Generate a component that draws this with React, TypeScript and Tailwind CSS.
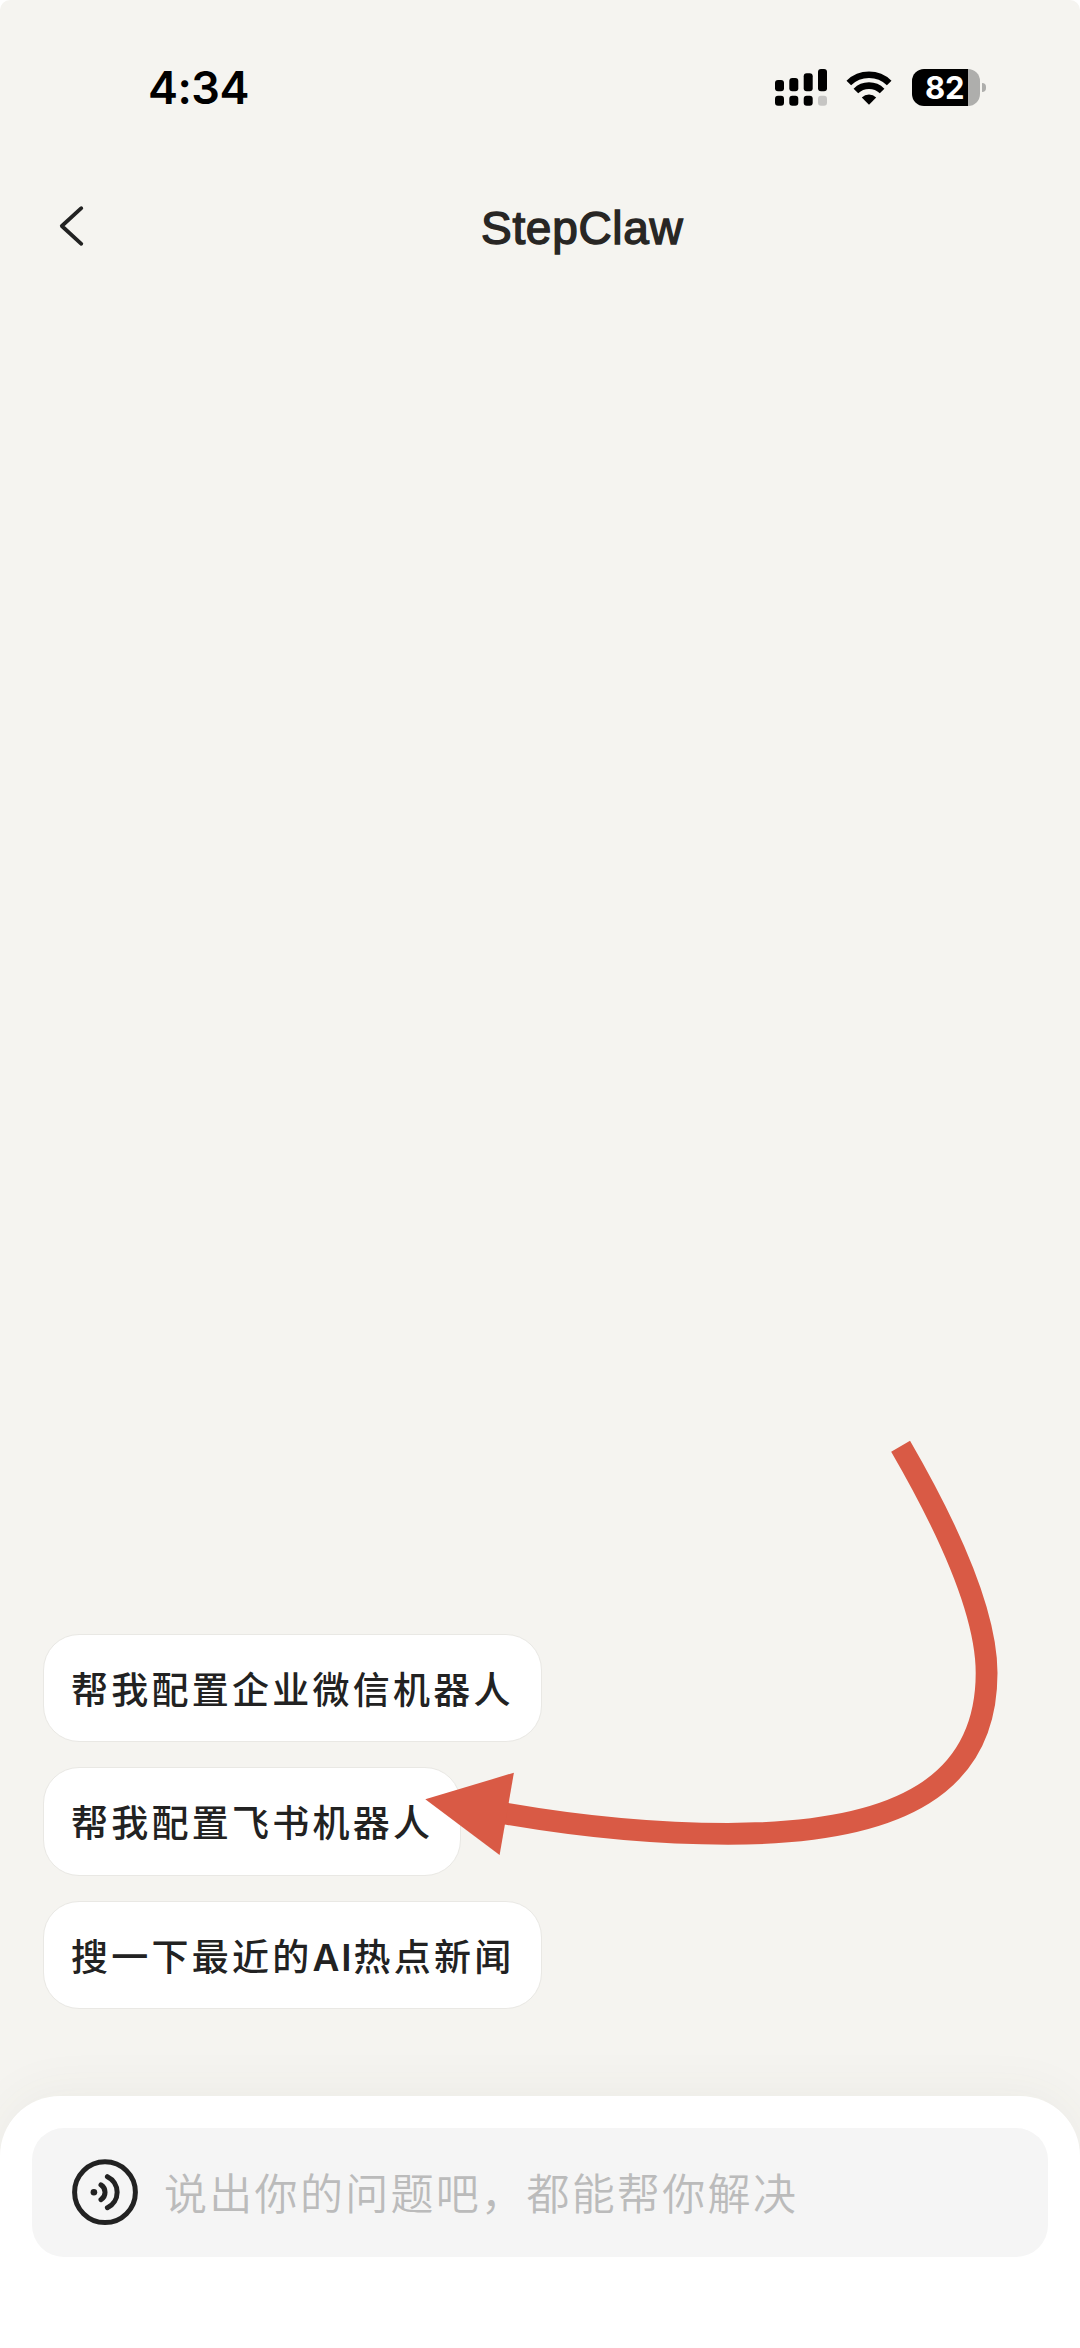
import type { ReactNode } from "react";

const suggestions: { id: string; label: ReactNode }[] = [
  { id: "wecom", label: "帮我配置企业微信机器人" },
  { id: "feishu", label: "帮我配置飞书机器人" },
  {
    id: "news",
    label: (
      <>
        搜一下最近的<span className="font-['Inter'] leading-none font-semibold tracking-[1.9px]">AI</span>热点新闻
      </>
    ),
  },
];

function SignalIcon() {
  const bars = [
    { x: 0, top: 11 },
    { x: 14.3, top: 9 },
    { x: 28.7, top: 4.3 },
    { x: 43, top: 0 },
  ];
  return (
    <svg className="h-[37px] w-[52px]" viewBox="0 0 52 37">
      {bars.map((b, i) => (
        <g key={b.x}>
          <rect x={b.x} y={b.top} width="9" height={22.3 - b.top} rx="3" fill="#000" />
          <rect x={b.x} y="26.8" width="9" height="10" rx="3" fill={i === 3 ? "#c6c5c3" : "#000"} />
        </g>
      ))}
    </svg>
  );
}

function WifiIcon() {
  return (
    <svg className="mr-[19.5px] ml-[19.5px] h-[36px] w-[46px]" viewBox="0 0 46 36">
      <g fill="none" stroke="#000" strokeWidth="6.6">
        <path d="M2.8 13a29 29 0 0 1 40.4 0" />
        <path d="M9.9 21a18.7 18.7 0 0 1 26.2 0" />
      </g>
      <path d="M23 34.8l-7.2-7.2a10.2 10.2 0 0 1 14.4 0z" fill="#000" />
    </svg>
  );
}

function Battery() {
  return (
    <div className="flex items-center">
      <div className="flex h-[37px] w-[68px] items-center overflow-hidden rounded-[12px] bg-[linear-gradient(to_right,#000_56px,#aeaeac_56px)]">
        <span className="ml-[13.5px] font-['Inter'] text-[31px] leading-[37px] font-bold tracking-[-0.2px] text-white">82</span>
      </div>
      <div className="ml-[2px] h-[9px] w-[4px] rounded-r-full bg-[#aeaeac]" />
    </div>
  );
}

function VoiceIcon() {
  return (
    <svg className="h-[68px] w-[68px]" viewBox="0 0 68 68" fill="none" stroke="#222" strokeLinecap="round">
      <circle cx="34" cy="34.2" r="30.4" strokeWidth="5" />
      <circle cx="22.9" cy="34.2" r="3.3" fill="#222" stroke="none" />
      <path d="M30 26.8a8.8 8.8 0 0 1 0 14.8" strokeWidth="5" />
      <path d="M36.4 18.7a17.2 17.2 0 0 1 0 31" strokeWidth="5" />
    </svg>
  );
}

export default function App() {
  return (
    <div className="h-[2348px] w-[1080px] overflow-hidden bg-white font-['Noto_Sans_CJK_SC',sans-serif]">
      <div className="relative flex h-full flex-col overflow-hidden rounded-t-[10px] bg-[#f5f4f0]">
        <header className="flex h-[176px] items-start justify-between pr-[94.5px] pl-[148px]">
          <time className="mt-[60px] font-['Inter'] text-[45px] leading-[56px] font-semibold tracking-[-0.5px] text-black">4:34</time>
          <div className="mt-[69px] flex items-center">
            <SignalIcon />
            <WifiIcon />
            <Battery />
          </div>
        </header>

        <nav className="flex h-[100px] items-center">
          <svg className="ml-[57px] h-[44px] w-[30px]" viewBox="0 0 30 44" fill="none">
            <path d="M24.3 4.2L4.8 22l19.5 17.8" stroke="#222" strokeWidth="3.8" strokeLinecap="round" strokeLinejoin="round" />
          </svg>
          <h1 className="ml-[394px] pt-[4px] font-['Liberation_Sans'] text-[46px] leading-[60px] tracking-[0.7px] text-[#282624] [-webkit-text-stroke:1.4px_#282624]">
            StepClaw
          </h1>
        </nav>

        <main className="flex flex-1 flex-col items-start justify-end gap-[25px] pb-[87px] pl-[43px]">
          {suggestions.map((s) => (
            <button
              key={s.id}
              className="flex h-[108.5px] items-center rounded-[36px] border border-[#e9e8e4] bg-white pr-[27px] pl-[27px] text-[37px] leading-[54px] font-medium tracking-[3.25px] whitespace-nowrap text-[#222]"
            >
              <span>{s.label}</span>
            </button>
          ))}
        </main>

        <footer className="h-[252px] rounded-t-[60px] bg-white px-8 pt-8 shadow-[0_-6px_50px_rgba(80,70,50,0.05)]">
          <div className="flex h-[128.5px] items-center rounded-[32px] bg-[#f5f5f5] pl-[39px]">
            <VoiceIcon />
            <span className="-mt-[2px] ml-[25px] text-[43px] leading-[62px] font-[350] tracking-[2.3px] text-[#bbb]">说出你的问题吧，都能帮你解决</span>
          </div>
        </footer>

        <svg className="pointer-events-none absolute top-[1430px] left-[415px] h-[440px] w-[600px]" viewBox="415 1430 600 440">
          <path
            d="M900.6 1446.2Q986.6 1594.7 986.6 1673C986.6 1782 904 1833.8 728 1833.8Q622 1833.8 504 1813.3"
            fill="none"
            stroke="#d95a45"
            strokeWidth="21.8"
          />
          <path d="M425.3 1799.3L513.9 1772.7L499.6 1855Z" fill="#d95a45" />
        </svg>
      </div>
    </div>
  );
}
